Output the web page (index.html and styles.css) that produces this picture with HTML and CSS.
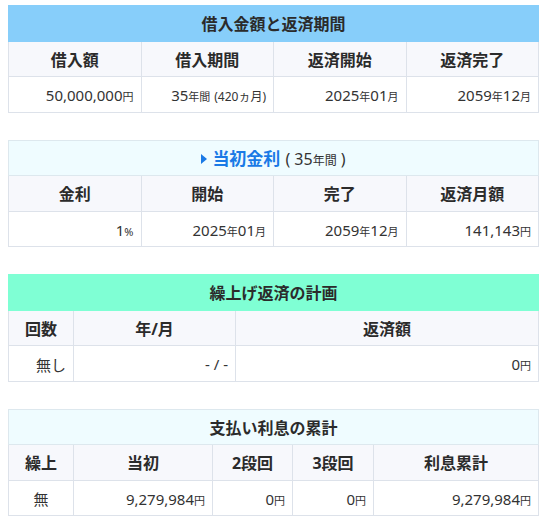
FILE: index.html
```html
<!DOCTYPE html>
<html lang="ja">
<head>
<meta charset="utf-8">
<link rel="stylesheet" href="styles.css">
</head>
<body>
<div class="page">
  <table class="tbl">
    <colgroup><col class="c25"><col class="c25"><col class="c25"><col class="c25"></colgroup>
    <tr><th colspan="4" class="title blue">借入金額と返済期間</th></tr>
    <tr><th>借入額</th><th>借入期間</th><th>返済開始</th><th>返済完了</th></tr>
    <tr>
      <td>50,000,000<small>円</small></td>
      <td>35<small>年間</small> <small class="paren">(420ヵ月)</small></td>
      <td>2025<small>年</small>01<small>月</small></td>
      <td>2059<small>年</small>12<small>月</small></td>
    </tr>
  </table>

  <table class="tbl">
    <colgroup><col class="c25"><col class="c25"><col class="c25"><col class="c25"></colgroup>
    <tr><th colspan="4" class="title cyan"><span class="tri"></span><span class="rate">当初金利</span><span class="period">( 35<small>年間</small> )</span></th></tr>
    <tr><th>金利</th><th>開始</th><th>完了</th><th>返済月額</th></tr>
    <tr>
      <td>1<small>%</small></td>
      <td>2025<small>年</small>01<small>月</small></td>
      <td>2059<small>年</small>12<small>月</small></td>
      <td>141,143<small>円</small></td>
    </tr>
  </table>

  <table class="tbl">
    <colgroup><col class="w65"><col class="w162"><col></colgroup>
    <tr><th colspan="3" class="title green">繰上げ返済の計画</th></tr>
    <tr><th>回数</th><th>年/月</th><th>返済額</th></tr>
    <tr>
      <td>無し</td>
      <td>- / -</td>
      <td>0<small>円</small></td>
    </tr>
  </table>

  <table class="tbl">
    <colgroup><col class="w65"><col class="w139"><col class="w80"><col class="w81"><col></colgroup>
    <tr><th colspan="5" class="title cyan">支払い利息の累計</th></tr>
    <tr><th>繰上</th><th>当初</th><th>2段回</th><th>3段回</th><th>利息累計</th></tr>
    <tr>
      <td class="center">無</td>
      <td>9,279,984<small>円</small></td>
      <td>0<small>円</small></td>
      <td>0<small>円</small></td>
      <td>9,279,984<small>円</small></td>
    </tr>
  </table>
</div>
</body>
</html>
```

FILE: styles.css
```css
html, body {
  margin: 0;
  padding: 0;
  background: #ffffff;
}

.page {
  padding: 5px 9px 0 8px;
  font-family: "Noto Sans", "Noto Sans CJK JP", sans-serif;
  color: #333333;
}

.tbl {
  width: 100%;
  border-collapse: collapse;
  table-layout: fixed;
  margin-bottom: 27px;
}

.c25 { width: 25%; }
.w65 { width: 65px; }
.w162 { width: 162px; }
.w139 { width: 139px; }
.w80 { width: 80px; }
.w81 { width: 81px; }

.tbl th,
.tbl td {
  border: 1px solid #dde2ea;
  height: 35.5px;
  padding: 0 7px;
  box-sizing: border-box;
}

.tbl th {
  background: #f7f8fc;
  font-size: 16px;
  font-weight: 700;
  text-align: center;
  color: #2b2b2b;
}

.tbl th.blue { background: #87cefa; border-color: #87cefa; }
.tbl th.cyan { background: #effcff; border-color: #dde8ee; }
.tbl th.green { background: #7fffd4; border-color: #7fffd4; }

.tbl td {
  font-size: 15px;
  text-align: right;
  color: #333333;
  background: #ffffff;
  padding-top: 2px;
}

.tbl td.center { text-align: center; }

.tbl small {
  font-size: 11px;
}

.tbl small.paren {
  font-size: 12px;
}

.tri {
  display: inline-block;
  width: 0;
  height: 0;
  border-top: 5px solid transparent;
  border-bottom: 5px solid transparent;
  border-left: 6px solid #1a7ae6;
  margin-right: 5px;
  vertical-align: 1px;
}

.rate {
  color: #1a7ae6;
  font-size: 17px;
  font-weight: 700;
}

.period {
  font-weight: 400;
  font-size: 16px;
  margin-left: 5px;
  color: #333333;
}

.period small {
  font-size: 12px;
}
```
